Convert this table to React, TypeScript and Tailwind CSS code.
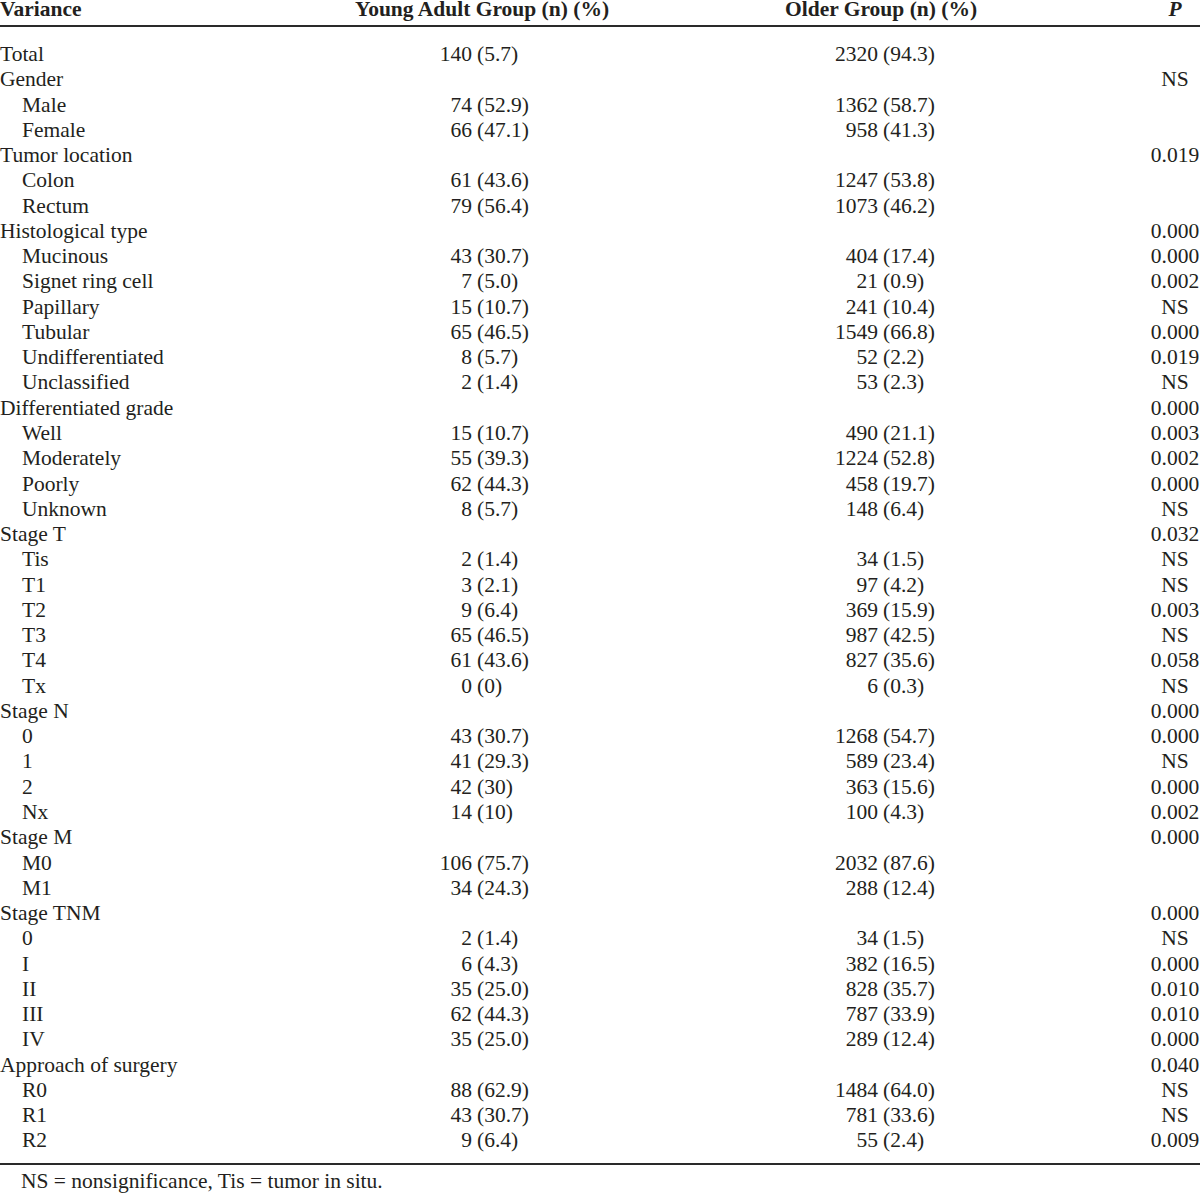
import React from "react";

type Row = { label: string; sub?: boolean; yn?: string; yp?: string; on?: string; op?: string; p?: string };

const r = (label: string, y: string, o: string, p = "", sub = true): Row => {
  const [yn, yp] = y.split(" ");
  const [on, op] = o.split(" ");
  return { label, sub, yn, yp, on, op, p };
};
const g = (label: string, p = ""): Row => ({ label, p });

const rows: Row[] = [
  r("Total", "140 (5.7)", "2320 (94.3)", "", false),
  g("Gender", "NS"),
  r("Male", "74 (52.9)", "1362 (58.7)"),
  r("Female", "66 (47.1)", "958 (41.3)"),
  g("Tumor location", "0.019"),
  r("Colon", "61 (43.6)", "1247 (53.8)"),
  r("Rectum", "79 (56.4)", "1073 (46.2)"),
  g("Histological type", "0.000"),
  r("Mucinous", "43 (30.7)", "404 (17.4)", "0.000"),
  r("Signet ring cell", "7 (5.0)", "21 (0.9)", "0.002"),
  r("Papillary", "15 (10.7)", "241 (10.4)", "NS"),
  r("Tubular", "65 (46.5)", "1549 (66.8)", "0.000"),
  r("Undifferentiated", "8 (5.7)", "52 (2.2)", "0.019"),
  r("Unclassified", "2 (1.4)", "53 (2.3)", "NS"),
  g("Differentiated grade", "0.000"),
  r("Well", "15 (10.7)", "490 (21.1)", "0.003"),
  r("Moderately", "55 (39.3)", "1224 (52.8)", "0.002"),
  r("Poorly", "62 (44.3)", "458 (19.7)", "0.000"),
  r("Unknown", "8 (5.7)", "148 (6.4)", "NS"),
  g("Stage T", "0.032"),
  r("Tis", "2 (1.4)", "34 (1.5)", "NS"),
  r("T1", "3 (2.1)", "97 (4.2)", "NS"),
  r("T2", "9 (6.4)", "369 (15.9)", "0.003"),
  r("T3", "65 (46.5)", "987 (42.5)", "NS"),
  r("T4", "61 (43.6)", "827 (35.6)", "0.058"),
  r("Tx", "0 (0)", "6 (0.3)", "NS"),
  g("Stage N", "0.000"),
  r("0", "43 (30.7)", "1268 (54.7)", "0.000"),
  r("1", "41 (29.3)", "589 (23.4)", "NS"),
  r("2", "42 (30)", "363 (15.6)", "0.000"),
  r("Nx", "14 (10)", "100 (4.3)", "0.002"),
  g("Stage M", "0.000"),
  r("M0", "106 (75.7)", "2032 (87.6)"),
  r("M1", "34 (24.3)", "288 (12.4)"),
  g("Stage TNM", "0.000"),
  r("0", "2 (1.4)", "34 (1.5)", "NS"),
  r("I", "6 (4.3)", "382 (16.5)", "0.000"),
  r("II", "35 (25.0)", "828 (35.7)", "0.010"),
  r("III", "62 (44.3)", "787 (33.9)", "0.010"),
  r("IV", "35 (25.0)", "289 (12.4)", "0.000"),
  g("Approach of surgery", "0.040"),
  r("R0", "88 (62.9)", "1484 (64.0)", "NS"),
  r("R1", "43 (30.7)", "781 (33.6)", "NS"),
  r("R2", "9 (6.4)", "55 (2.4)", "0.009"),
];

export default function App() {
  return (
    <div
      className="w-[1200px] h-[1198px] bg-white text-[#231f20] text-[21.5px] overflow-hidden"
      style={{ fontFamily: '"Liberation Serif", "Times New Roman", serif' }}
    >
      <div className="flex font-bold leading-[16px] pt-[1px] pb-[8px] border-b-2 border-[#2a2a2a] whitespace-nowrap">
        <div className="w-[355px]">Variance</div>
        <div className="w-[430px]">Young Adult Group (n) (%)</div>
        <div className="w-[365px]">Older Group (n) (%)</div>
        <div className="w-[50px] text-center italic">P</div>
      </div>
      <div className="pt-[15px] pb-[9px] border-b-2 border-[#2a2a2a]">
        {rows.map((row, i) => (
          <div
            key={i}
            className="grid grid-cols-[350px_122px_228px_178px_272px_50px] leading-[25.28px] h-[25.28px] whitespace-nowrap"
          >
            <div className={row.sub ? "pl-[22px]" : ""}>{row.label}</div>
            <div className="text-right">{row.yn ?? ""}</div>
            <div className="pl-[5px]">{row.yp ?? ""}</div>
            <div className="text-right">{row.on ?? ""}</div>
            <div className="pl-[5px]">{row.op ?? ""}</div>
            <div className="text-center">{row.p ?? ""}</div>
          </div>
        ))}
      </div>
      <div className="pl-[21px] leading-[25.28px] pt-[4px]">NS = nonsignificance, Tis = tumor in situ.</div>
    </div>
  );
}
